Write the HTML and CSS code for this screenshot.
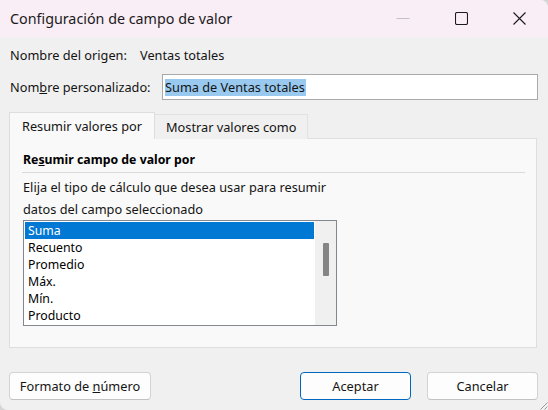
FILE: index.html
```html
<!DOCTYPE html>
<html lang="es">
<head>
<meta charset="utf-8">
<title>Configuración de campo de valor</title>
<link rel="stylesheet" href="styles.css">
</head>
<body>
<div class="window">
  <div class="titlebar">
    <div class="title">Configuración de campo de valor</div>
    <div class="caption">
      <div class="cap-btn">
        <svg width="14" height="14" viewBox="0 0 14 14"><path d="M0.5 7.5H13.5" stroke="#c2c2c2" stroke-width="1" fill="none"/></svg>
      </div>
      <div class="cap-btn">
        <svg width="13" height="13" viewBox="0 0 13 13"><rect x="0.5" y="0.5" width="12" height="12" rx="1.5" ry="1.5" stroke="#1b1b1b" stroke-width="1.1" fill="none"/></svg>
      </div>
      <div class="cap-btn">
        <svg width="13" height="13" viewBox="0 0 13 13"><path d="M0.5 0.5L12.5 12.5M12.5 0.5L0.5 12.5" stroke="#1b1b1b" stroke-width="1.1" fill="none"/></svg>
      </div>
    </div>
  </div>

  <div class="content">
    <div class="row-origin">
      <span class="origin-label">Nombre del origen:</span>
      <span>Ventas totales</span>
    </div>

    <div class="row-name">
      <span class="name-label">Nom<u>b</u>re personalizado:</span>
      <div class="textbox"><span class="sel">Suma de Ventas totales</span></div>
    </div>

    <div class="tabs">
      <div class="tab tab-active">Resumir valores por</div>
      <div class="tab tab-inactive">Mostrar valores como</div>
    </div>

    <div class="panel">
      <div class="heading">Re<u>s</u>umir campo de valor por</div>
      <div class="separator"></div>
      <div class="desc">Elija el tipo de cálculo que desea usar para resumir<br>datos del campo seleccionado</div>
      <div class="listbox">
        <div class="items">
          <div class="item item-selected">Suma</div>
          <div class="item">Recuento</div>
          <div class="item">Promedio</div>
          <div class="item">Máx.</div>
          <div class="item">Mín.</div>
          <div class="item">Producto</div>
        </div>
        <div class="scrollbar"><div class="thumb"></div></div>
      </div>
    </div>

    <div class="buttons">
      <button class="btn btn-format">Formato de <u>n</u>úmero</button>
      <div class="btn-group">
        <button class="btn btn-default">Aceptar</button>
        <button class="btn">Cancelar</button>
      </div>
    </div>
  </div>

  <svg class="grip" width="10" height="10" viewBox="0 0 10 10"><path d="M9.5 2.5L2.5 9.5M9.5 6.5L6.5 9.5" stroke="#9a9a9a" stroke-width="1" fill="none"/></svg>
</div>
</body>
</html>
```

FILE: styles.css
```css
html, body {
  margin: 0;
  padding: 0;
  background: #d6d6d6;
}

body {
  font-family: "Noto Sans", "Open Sans", sans-serif;
  font-size: 12.75px;
  color: #141414;
}

.window {
  position: relative;
  width: 548px;
  height: 410px;
  background: #f0f0f0;
  border-radius: 0 8px 0 8px;
  overflow: hidden;
}

.titlebar {
  height: 37px;
  background: #f9edf6;
  display: flex;
  align-items: center;
  justify-content: space-between;
}

.title {
  padding-left: 10px;
  font-size: 14.3px;
  line-height: 20px;
  padding-top: 1px;
  color: #1b1b1b;
}

.caption {
  display: flex;
  height: 37px;
}

.cap-btn {
  width: 58px;
  height: 37px;
  display: flex;
  align-items: center;
  justify-content: center;
}

.cap-btn svg {
  display: block;
  margin-top: -1px;
}

.content {
  padding: 0 10px 0 9px;
}

.row-origin {
  margin-top: 8px;
  line-height: 20px;
  display: flex;
}

.origin-label {
  width: 130px;
  padding-left: 1px;
}

.row-name {
  margin-top: 9px;
  display: flex;
  align-items: center;
  height: 26px;
}

.name-label {
  width: 153px;
  padding-left: 1px;
  box-sizing: border-box;
}

.textbox {
  flex: 1;
  height: 26px;
  box-sizing: border-box;
  border: 1px solid #a9a9a9;
  background: #ffffff;
  display: flex;
  align-items: center;
  padding-left: 2px;
}

.sel {
  background: #99c9ef;
  line-height: 17px;
  padding-right: 1px;
}

.tabs {
  margin-top: 12px;
  height: 27px;
  display: flex;
  align-items: flex-end;
}

.tab {
  box-sizing: border-box;
  line-height: 22px;
  white-space: nowrap;
}

.tab-active {
  position: relative;
  z-index: 1;
  width: 146px;
  height: 27px;
  padding: 2px 0 0 12px;
  background: #f9f9f9;
  border: 1px solid #dedede;
  border-bottom: none;
}

.tab-inactive {
  width: 153px;
  height: 25px;
  padding: 1px 0 0 11px;
  background: #f0f0f0;
  border: 1px solid #e1e1e1;
  border-left: none;
  border-bottom: none;
}

.panel {
  margin-top: -1px;
  margin-right: 1px;
  background: #f9f9f9;
  border: 1px solid #dedede;
  padding: 12px 11px 21px 13px;
}

.heading {
  font-weight: 700;
  font-size: 12.3px;
  line-height: 18px;
  color: #000000;
}

.separator {
  margin-top: 3px;
  margin-left: -1px;
  height: 1px;
  background: #d9d9d9;
}

.desc {
  margin-top: 4px;
  line-height: 21.5px;
}

.listbox {
  margin-top: 0px;
  width: 314px;
  height: 106px;
  box-sizing: border-box;
  border: 1px solid #828790;
  background: #ffffff;
  display: flex;
}

.items {
  flex: 1;
  padding: 1px;
}

.item {
  height: 17px;
  line-height: 18px;
  padding-left: 3px;
  font-size: 12.3px;
  color: #000000;
}

.item-selected {
  background: #0078d4;
  color: #ffffff;
}

.scrollbar {
  width: 21px;
  background: #f0f0f0;
  display: flex;
  justify-content: center;
  padding-top: 22px;
  box-sizing: border-box;
}

.thumb {
  width: 6px;
  height: 33px;
  background: #858585;
  border-radius: 1px;
}

.buttons {
  margin-top: 24px;
  display: flex;
  justify-content: space-between;
}

.btn-group {
  display: flex;
  gap: 16px;
}

.btn {
  font-family: inherit;
  font-size: 12.75px;
  color: #141414;
  height: 28px;
  width: 111px;
  padding: 0;
  background: #fdfdfd;
  border: 1px solid #d3d3d3;
  border-bottom-color: #c2c2c2;
  border-radius: 4px;
}

.btn-format {
  width: 142px;
}

.btn-default {
  border: 1px solid #0067c0;
}

.grip {
  position: absolute;
  right: 0;
  bottom: 0;
}
```
